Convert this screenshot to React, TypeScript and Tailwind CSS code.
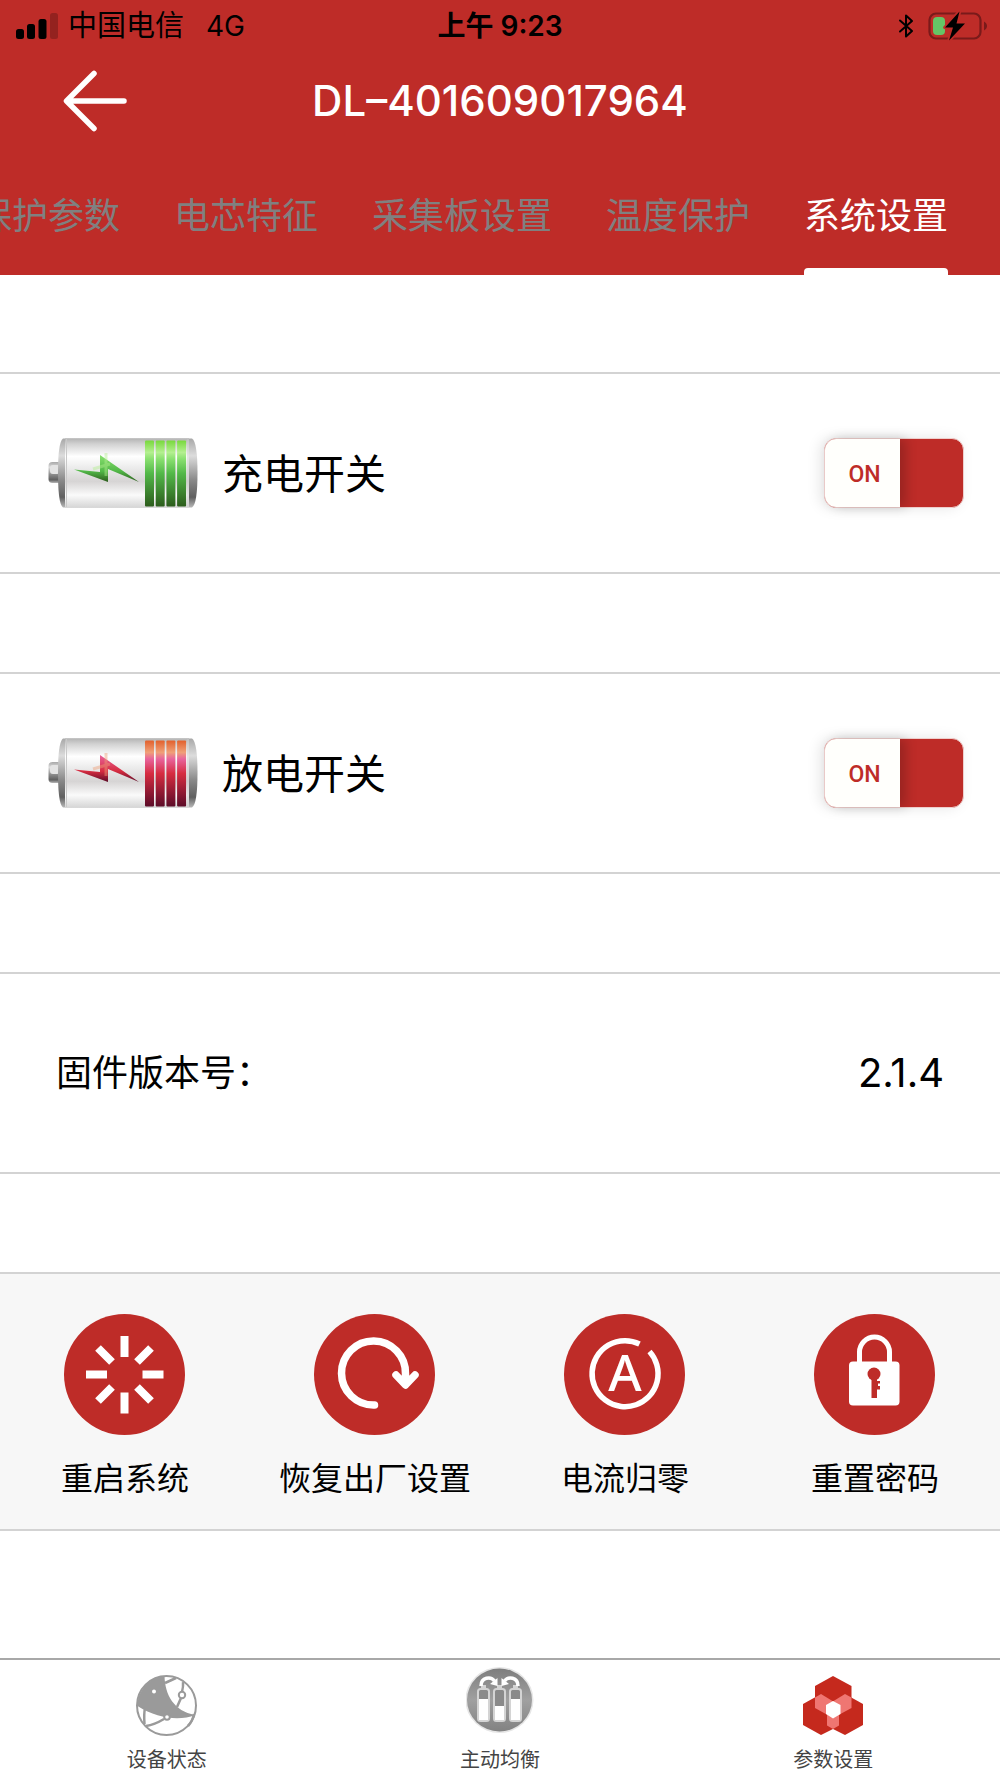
import { useState } from "react";
import type { ReactNode } from "react";

const tabs = ["保护参数", "电芯特征", "采集板设置", "温度保护", "系统设置"];

function StatusBar() {
  return (
    <div className="grid h-[50px] grid-cols-[1fr_auto_1fr] items-center px-3 text-[28px] leading-[52px] text-black">
      <div className="flex items-center gap-[10px] pl-1">
        <svg width="42" height="28" viewBox="0 0 42 28" aria-hidden="true">
          <rect x="0" y="17" width="8" height="10" rx="2.5" />
          <rect x="11" y="12" width="8" height="15" rx="2.5" />
          <rect x="22.5" y="7" width="8" height="20" rx="2.5" />
          <rect x="34" y="1" width="8" height="26" rx="2.5" opacity="0.22" />
        </svg>
        <span className="text-[29px]">中国电信</span>
        <span className="ml-3">4G</span>
      </div>
      <span className="font-semibold">上午 9:23</span>
      <div className="flex items-center justify-end gap-[14px]">
        <svg width="16" height="24" viewBox="0 0 16 24" fill="none" stroke="#000" strokeWidth="2" strokeLinejoin="round" strokeLinecap="round" aria-hidden="true">
          <path d="M2 6.5 L14 17 L8 22.5 V1.5 L14 7 L2 17.5" />
        </svg>
        <svg width="60" height="30" viewBox="0 0 60 30" aria-hidden="true">
          <rect x="1.5" y="2.5" width="51" height="25" rx="6.5" fill="none" stroke="#7a1a1a" strokeWidth="2.2" />
          <path d="M56 10.5 C60 12.5 60 17.5 56 19.5 Z" fill="#7a1a1a" />
          <rect x="5" y="6" width="12" height="18" rx="4" fill="#65c466" />
          <path d="M31.5 0.5 L17 16.5 H25 L21 29.5 L37 12.5 H28.5 Z" fill="#000" stroke="#be2c28" strokeWidth="3.5" paintOrder="stroke" strokeLinejoin="round" />
        </svg>
      </div>
    </div>
  );
}

function Battery({ id, stops }: { id: string; stops: string[] }) {
  return (
    <svg width="150" height="70" viewBox="0 0 150 70" className="shrink-0" aria-hidden="true">
      <defs>
        <linearGradient id={`${id}-body`} x1="0" y1="0" x2="0" y2="1">
          <stop offset="0" stopColor="#b4b4b4" />
          <stop offset="0.08" stopColor="#d2d2d2" />
          <stop offset="0.26" stopColor="#ffffff" />
          <stop offset="0.42" stopColor="#ececec" />
          <stop offset="0.62" stopColor="#d6d4d4" />
          <stop offset="0.82" stopColor="#fafafa" />
          <stop offset="1" stopColor="#d6d6d6" />
        </linearGradient>
        <linearGradient id={`${id}-cap`} x1="0" y1="0" x2="0" y2="1">
          <stop offset="0" stopColor="#a8a8a8" />
          <stop offset="0.25" stopColor="#dcdcdc" />
          <stop offset="0.6" stopColor="#8a8a8a" />
          <stop offset="0.85" stopColor="#606060" />
          <stop offset="1" stopColor="#b8b8b8" />
        </linearGradient>
        <linearGradient id={`${id}-bar`} x1="0" y1="0" x2="0" y2="1">
          <stop offset="0" stopColor={stops[0]} />
          <stop offset="0.18" stopColor={stops[1]} />
          <stop offset="0.28" stopColor={stops[2]} />
          <stop offset="0.5" stopColor={stops[3]} />
          <stop offset="1" stopColor={stops[4]} />
        </linearGradient>
        <linearGradient id={`${id}-bolt`} x1="0" y1="0" x2="0" y2="1">
          <stop offset="0" stopColor={stops[2]} />
          <stop offset="0.6" stopColor={stops[3]} />
          <stop offset="1" stopColor={stops[4]} />
        </linearGradient>
      </defs>
      <rect x="0.5" y="24" width="14" height="21" rx="4" fill={`url(#${id}-cap)`} />
      <rect x="2" y="27" width="10" height="9" rx="3" fill="#e4e4e4" />
      <path d="M15 0.5 H144 Q149.5 4 149.5 35 Q149.5 66 144 69.5 H15 Q10 66 10 35 Q10 4 15 0.5 Z" fill={`url(#${id}-cap)`} />
      <rect x="17" y="0.5" width="124" height="69" fill={`url(#${id}-body)`} />
      <path d="M18.5 1 V69 M140 1 V69" stroke="#c8c8c8" strokeWidth="1" />
      {[97, 107.7, 118.4, 129.1].map((x) => (
        <rect key={x} x={x} y="2.5" width="9" height="66" rx="1" fill={`url(#${id}-bar)`} />
      ))}
      <path d="M26 31.5 L52 34 V17 L91 44 L60 31 V44 Z" fill={`url(#${id}-bolt)`} />
      <path d="M58 15 V38 M45 31 L62 26" stroke={stops[1]} strokeWidth="3" opacity="0.45" />
    </svg>
  );
}

function SwitchRow({ id, label, stops }: { id: string; label: string; stops: string[] }) {
  const [on, setOn] = useState(true);

  return (
    <section className="flex h-[202px] items-center border-y-2 border-[#d3d3d3] pr-9 pl-12">
      <Battery id={id} stops={stops} />
      <label htmlFor={id} className="ml-6 flex-1 pt-[2px] text-[41px] leading-[60px]">
        {label}
      </label>
      <label
        htmlFor={id}
        className="relative flex h-[70px] w-[140px] cursor-pointer rounded-xl border border-[#efcfcd] bg-[#be2c28] shadow-[-4px_0_14px_rgba(0,0,0,0.1)]"
      >
        <input
          id={id}
          type="checkbox"
          role="switch"
          checked={on}
          onChange={(e) => setOn(e.target.checked)}
          className="peer sr-only"
        />
        <span className="flex w-[75px] items-center justify-center rounded-l-[11px] bg-[#fffffc] pt-1 pl-1 font-[Roboto] text-[23px] leading-8 font-medium text-[#be2c28] shadow-[6px_0_12px_rgba(0,0,0,0.2)] peer-not-checked:order-last">
          {on ? "ON" : "OFF"}
        </span>
        <span className="flex-1" />
      </label>
    </section>
  );
}

function ActionButton({ label, children }: { label: string; children: ReactNode }) {
  return (
    <button type="button" className="flex flex-col items-center gap-6 pt-10 pb-[30px]">
      <svg width="122" height="121" viewBox="0 0 122 121" fill="none" stroke="#fff" aria-hidden="true">
        <circle cx="60.5" cy="60.5" r="60.5" fill="#be2c28" stroke="none" />
        {children}
      </svg>
      <span className="text-[32px] leading-10">{label}</span>
    </button>
  );
}

function NavLink({ label, children }: { label: string; children: ReactNode }) {
  return (
    <a href="#" className="flex flex-col items-center justify-end gap-1 pb-[3px] text-[20px] leading-[30px] text-[#444]">
      {children}
      {label}
    </a>
  );
}

function DeviceIcon() {
  return (
    <svg width="62" height="66" viewBox="0 0 62 66" fill="none" stroke="#9a9a9a" strokeWidth="2" aria-hidden="true">
      <circle cx="30.5" cy="30.5" r="29.5" />
      <path d="M28.5 1 C29 20 38 36 59 40 C44 46 22 44 1.5 31 A29.5 29.5 0 0 1 28.5 1 Z" fill="#9a9a9a" stroke="none" />
      <path d="M29 8 L40 3 M47 7 C47.5 11 47 13 46 17 M45 23 L41 32 M9 33 C8 38 8 43 8.5 49 M10 51 C17 50 23 47 28 44 M58 39 C57 44 55 48 52 51" strokeWidth="2.5" />
      <circle cx="46" cy="20" r="3.2" fill="#fff" />
      <circle cx="31" cy="42" r="2.8" fill="#fff" />
      <circle cx="18" cy="16.5" r="2" fill="#fff" stroke="none" />
    </svg>
  );
}

function BalanceIcon() {
  const cells = [
    { x: 12, fill: 32 },
    { x: 28, fill: 39 },
    { x: 44, fill: 32 },
  ];

  return (
    <svg width="68" height="74" viewBox="0 0 68 74" aria-hidden="true">
      <defs>
        <linearGradient id="balance-disc" x1="0" y1="0" x2="0" y2="1">
          <stop offset="0" stopColor="#7e7e7e" />
          <stop offset="0.5" stopColor="#a0a0a0" />
          <stop offset="1" stopColor="#828282" />
        </linearGradient>
      </defs>
      <ellipse cx="33.5" cy="33" rx="34" ry="33" fill="#e6e6e6" />
      <ellipse cx="33.5" cy="33" rx="32.5" ry="31.5" fill="url(#balance-disc)" />
      {cells.map((cell) => (
        <g key={cell.x}>
          <rect x={cell.x + 3} y="18" width="5" height="4" fill="#d4d4d4" />
          <rect x={cell.x} y="22" width="11" height="32" rx="2.5" fill="#8a8a8a" stroke="#d4d4d4" strokeWidth="2" />
          <rect x={cell.x + 1} y={cell.fill} width="9" height={53 - cell.fill} fill="#fff" />
        </g>
      ))}
      <path d="M15 19 C15 10 25 9 28.5 14 M52 19 C52 10 42 9 38.5 14" fill="none" stroke="#fff" strokeWidth="3.5" />
      <path d="M31.5 11 V19 L24 17 Z M35.5 11 V19 L43 17 Z" fill="#fff" />
    </svg>
  );
}

function SettingsIcon() {
  return (
    <svg width="61" height="65" viewBox="0 0 61 65" aria-hidden="true">
      <g fill="#c5291d">
        <path d="M30 0 L48.5 10 V32 L30 42 L12 32 V10 Z" />
        <path d="M18 18 L36 29 V50 L18 59 L0 49 V28 Z" />
        <path d="M42 18 L60 28 V49 L42 59 L24 50 V29 Z" />
      </g>
      <g fill="#ef7672">
        <path d="M12 21.5 L18 18 L36 29 V39 L30 42 L12 32 Z" />
        <path d="M48.5 21.5 L42 18 L24 29 V39 L30 42 L48.5 32 Z" />
        <path d="M24 29 H36 V49.5 L30 53 L24 49.5 Z" />
      </g>
      <path d="M30 25 L37.5 29 V38 L30 42.5 L23 38 V29 Z" fill="#fff" />
    </svg>
  );
}

export default function App() {
  const [active, setActive] = useState("系统设置");

  return (
    <div className="flex min-h-screen flex-col bg-white font-[Inter,'Noto_Sans_CJK_SC',sans-serif] text-black">
      <header className="bg-[#be2c28] text-white">
        <StatusBar />
        <div className="grid h-[102px] grid-cols-[1fr_auto_1fr] items-center">
          <button type="button" aria-label="返回" className="ml-[62px] w-16">
            <svg width="66" height="62" viewBox="0 0 66 62" fill="none" stroke="#fff" strokeWidth="5.5" strokeLinecap="round" strokeLinejoin="round" aria-hidden="true">
              <path d="M62 31 H5 M32 3.5 L4.5 31 L32 58.5" />
            </svg>
          </button>
          <h1 className="text-[42px] leading-[60px] font-medium">DL–401609017964</h1>
        </div>
        <div role="tablist" className="flex h-[123px] justify-end gap-[54px] overflow-hidden pr-[52px]">
          {tabs.map((tab) => (
            <button
              key={tab}
              type="button"
              role="tab"
              aria-selected={tab === active}
              onClick={() => setActive(tab)}
              className={`relative shrink-0 pt-1 text-[36px] leading-[54px] ${tab === active ? "text-white" : "text-[#808080]"}`}
            >
              {tab}
              {tab === active && <span className="absolute inset-x-0 bottom-0 h-[7px] rounded-t bg-white" />}
            </button>
          ))}
        </div>
      </header>

      <main className="flex flex-1 flex-col gap-[98px] pt-[97px] pb-24">
        <SwitchRow id="charge" label="充电开关" stops={["#78d83c", "#b4f090", "#8ae070", "#52b848", "#2c5c1c"]} />
        <SwitchRow id="discharge" label="放电开关" stops={["#e2602c", "#f0a078", "#e8649c", "#d62c40", "#5c0c28"]} />

        <section className="flex h-[202px] items-center justify-between border-y-2 border-[#d3d3d3] px-14">
          <span className="text-[36px] leading-[54px]">固件版本号：</span>
          <span className="text-[40px] leading-[54px]">2.1.4</span>
        </section>

        <section className="grid grid-cols-4 border-y-2 border-[#d3d3d3] bg-[#f7f7f7]">
          <ActionButton label="重启系统">
            <g strokeWidth="8">
              <path d="M60.5 22 V43 M60.5 78.5 V99.5 M22 60.5 H43 M78.5 60.5 H99.5" />
              <path d="M34 34 L48 48 M87 34 L73 48 M34 87 L48 73 M87 87 L73 73" />
            </g>
          </ActionButton>
          <ActionButton label="恢复出厂设置">
            <path
              d="M60.5 91 A32 32 0 1 1 91.5 60 V70 M82 61 L91.5 71 L101 61"
              strokeWidth="7.5"
              strokeLinecap="round"
              strokeLinejoin="round"
            />
          </ActionButton>
          <ActionButton label="电流归零">
            <path d="M85.5 37.5 A33 33 0 1 1 75.5 30" strokeWidth="5.5" />
            <text x="61" y="77" textAnchor="middle" fill="#fff" stroke="none" fontSize="51" fontWeight="500" fontFamily="Noto Sans, sans-serif">
              A
            </text>
          </ActionButton>
          <ActionButton label="重置密码">
            <path d="M45.5 49 V38 A15 15 0 0 1 75.5 38 V49" strokeWidth="5" />
            <rect x="35" y="47.5" width="50.5" height="44" rx="4" fill="#fff" stroke="none" />
            <circle cx="60" cy="60" r="6.5" fill="#be2c28" stroke="none" />
            <path d="M57.5 62 H63 V67 H66 V69.5 H64 V72 H66 V75.5 H63 V84 H57.5 Z" fill="#be2c28" stroke="none" />
          </ActionButton>
        </section>
      </main>

      <nav className="grid h-[120px] grid-cols-3 border-t-2 border-[#a8a8a8]">
        <NavLink label="设备状态">
          <DeviceIcon />
        </NavLink>
        <NavLink label="主动均衡">
          <BalanceIcon />
        </NavLink>
        <NavLink label="参数设置">
          <SettingsIcon />
        </NavLink>
      </nav>
    </div>
  );
}
